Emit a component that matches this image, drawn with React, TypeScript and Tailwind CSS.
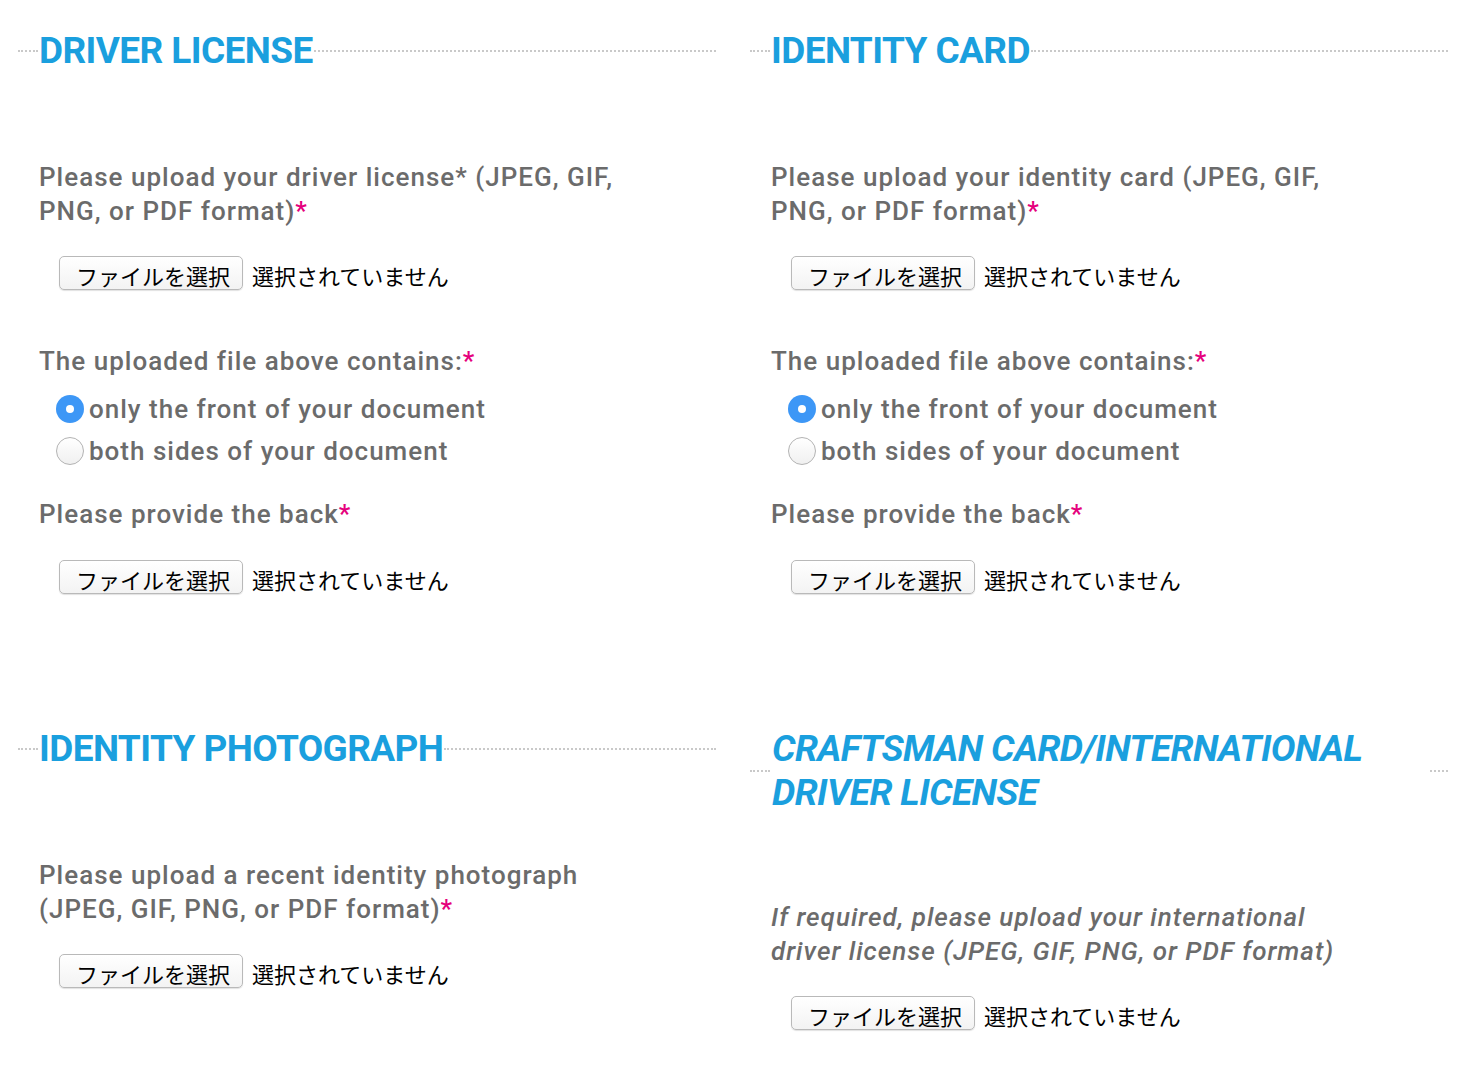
import React from "react";

const font = { fontFamily: "Roboto, 'Liberation Sans', sans-serif" };

function Star() {
  return <span className="text-[#e5007d]">*</span>;
}

function FileInput({ className = "" }: { className?: string }) {
  return (
    <div
      className={"flex items-center ml-[41px] " + className}
      style={{ fontFamily: "'Noto Sans CJK JP', sans-serif" }}
    >
      <div className="h-[34px] w-[184px] rounded-[5px] border border-[#b9b9b9] bg-gradient-to-b from-white to-[#f3f3f3] shadow-[0_1px_1px_rgba(0,0,0,0.12)] flex items-center pl-[16px] pt-[3px] text-[22px] leading-none text-black">
        ファイルを選択
      </div>
      <span className="ml-[9px] pt-[3px] text-[22px] leading-none text-black">選択されていません</span>
    </div>
  );
}

function Heading({ children, italic = false }: { children: React.ReactNode; italic?: boolean }) {
  return (
    <div className="flex items-center">
      <div className="w-[20px] shrink-0 border-t-2 border-dotted border-[#c9c9c9]" />
      <h2
        className={
          "mx-[1px] text-[37px] leading-[44px] font-bold text-[#1a9fde] tracking-[-0.6px] " +
          (italic ? "italic flex-1 pl-[1px]" : "whitespace-nowrap")
        }
        style={font}
      >
        {children}
      </h2>
      <div
        className={
          "border-t-2 border-dotted border-[#c9c9c9] " + (italic ? "w-[18px] shrink-0" : "flex-1")
        }
      />
    </div>
  );
}

function Label({ children, className = "" }: { children: React.ReactNode; className?: string }) {
  return (
    <p
      className={
        "pl-[21px] text-[26px] leading-[34px] font-medium text-[#6b6b6b] tracking-[1px] whitespace-nowrap " +
        className
      }
      style={font}
    >
      {children}
    </p>
  );
}

function Radio({ checked, label }: { checked: boolean; label: string }) {
  return (
    <div className="flex items-center h-[42px] pl-[38px]">
      {checked ? (
        <div className="w-[28px] h-[28px] rounded-full bg-[#3d97f6] flex items-center justify-center shrink-0">
          <div className="w-[8px] h-[8px] rounded-full bg-white" />
        </div>
      ) : (
        <div className="w-[28px] h-[28px] rounded-full border border-[#b3b3b3] bg-gradient-to-b from-white to-[#f0f0f0] shrink-0" />
      )}
      <span
        className="ml-[5px] text-[26px] leading-[34px] font-medium text-[#6b6b6b] tracking-[1px]"
        style={font}
      >
        {label}
      </span>
    </div>
  );
}

function DocSection({ title, line1, line2 }: { title: string; line1: string; line2: string }) {
  return (
    <div className="flex flex-col">
      <Heading>{title}</Heading>
      <Label className="mt-[87px]">
        {line1}
        <br />
        {line2}
        <Star />
      </Label>
      <FileInput className="mt-[28px]" />
      <Label className="mt-[54px]">
        The uploaded file above contains:
        <Star />
      </Label>
      <div className="mt-[10px]">
        <Radio checked label="only the front of your document" />
        <Radio checked={false} label="both sides of your document" />
      </div>
      <Label className="mt-[25px]">
        Please provide the back
        <Star />
      </Label>
      <FileInput className="mt-[29px]" />
    </div>
  );
}

export default function App() {
  return (
    <div className="min-h-[1066px] bg-white px-[18px] pt-[29px] pb-[30px]">
      <div className="grid grid-cols-2 gap-x-[34px] gap-y-[133px]">
        <DocSection
          title="DRIVER LICENSE"
          line1="Please upload your driver license* (JPEG, GIF,"
          line2="PNG, or PDF format)"
        />
        <DocSection
          title="IDENTITY CARD"
          line1="Please upload your identity card (JPEG, GIF,"
          line2="PNG, or PDF format)"
        />
        <div className="flex flex-col">
          <Heading>IDENTITY PHOTOGRAPH</Heading>
          <Label className="mt-[87px]">
            Please upload a recent identity photograph
            <br />
            (JPEG, GIF, PNG, or PDF format)
            <Star />
          </Label>
          <FileInput className="mt-[28px]" />
        </div>
        <div className="flex flex-col">
          <Heading italic>
            CRAFTSMAN CARD/INTERNATIONAL
            <br />
            DRIVER LICENSE
          </Heading>
          <Label className="mt-[85px] italic">
            If required, please upload your international
            <br />
            driver license (JPEG, GIF, PNG, or PDF format)
          </Label>
          <FileInput className="mt-[28px]" />
        </div>
      </div>
    </div>
  );
}
